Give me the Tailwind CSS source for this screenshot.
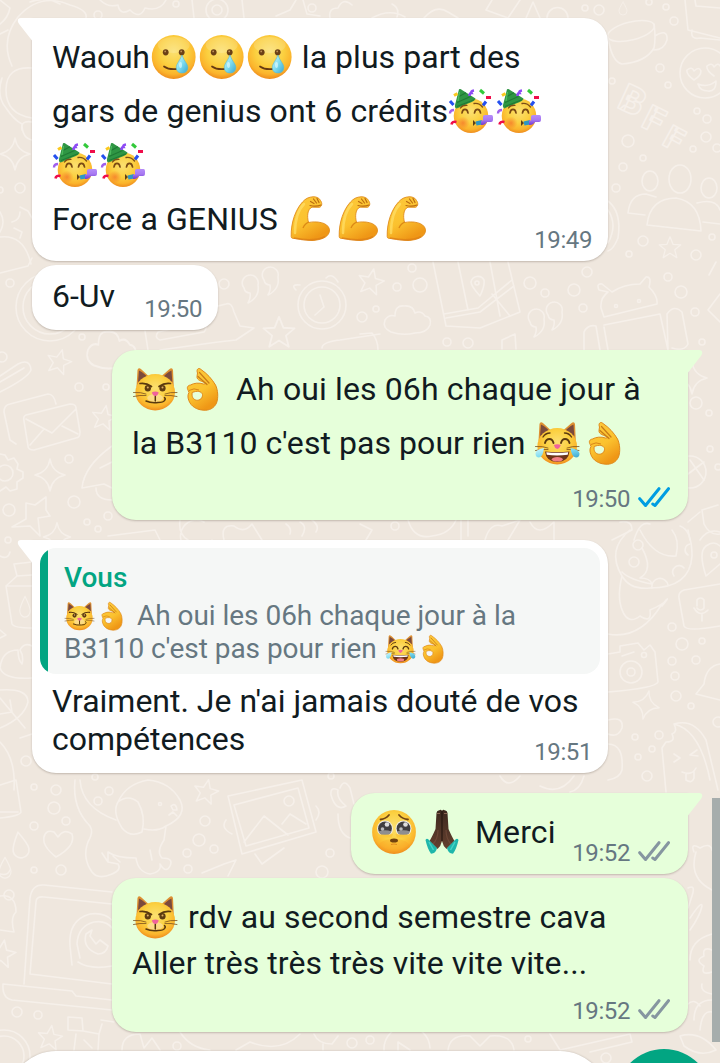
<!DOCTYPE html>
<html lang="fr">
<head>
<meta charset="utf-8">
<title>Discussion</title>
<script src="https://cdn.jsdelivr.net/npm/@tailwindcss/browser@4"></script>
</head>
<body class="h-[1063px] overflow-hidden bg-[#efe7de] font-['Roboto',sans-serif] text-[#111b21]">
<div class="relative h-[1063px] w-[720px] overflow-hidden">

<!-- Shared emoji and icon artwork -->
<svg class="absolute size-0" aria-hidden="true">
  <defs>
    <radialGradient id="face" cx=".5" cy=".38" r=".64"><stop offset="0" stop-color="#fbe071"/><stop offset=".5" stop-color="#fbd040"/><stop offset=".8" stop-color="#fbb42c"/><stop offset="1" stop-color="#ec861c"/></radialGradient>
    <linearGradient id="skin" x1="0" y1="0" x2=".5" y2="1"><stop offset="0" stop-color="#fdc93c"/><stop offset=".6" stop-color="#fbc22f"/><stop offset="1" stop-color="#ef9716"/></linearGradient>
    <linearGradient id="tear" x1="0" y1="0" x2="1" y2="1"><stop offset="0" stop-color="#d5f7fc"/><stop offset=".5" stop-color="#7fdcf0"/><stop offset="1" stop-color="#3ba7cf"/></linearGradient>
    <linearGradient id="dark" x1="0" y1="0" x2="0" y2="1"><stop offset="0" stop-color="#3d281f"/><stop offset="1" stop-color="#64402f"/></linearGradient>
    <linearGradient id="horn" x1="0" y1="0" x2="0" y2="1"><stop offset="0" stop-color="#b68cf8"/><stop offset=".5" stop-color="#a779f2"/><stop offset="1" stop-color="#7137cf"/></linearGradient>
    <radialGradient id="blush"><stop offset="0" stop-color="#f5762a" stop-opacity=".75"/><stop offset="1" stop-color="#f5762a" stop-opacity="0"/></radialGradient>

    <symbol id="e-tear" viewBox="0 0 48 48">
      <circle cx="23.7" cy="24" r="21.9" fill="url(#face)"/>
      <ellipse cx="23.7" cy="12" rx="16" ry="8" fill="#fff" opacity=".16"/>
      <ellipse cx="15.7" cy="19.3" rx="2.9" ry="3.1" fill="#6b4016"/><ellipse cx="31.7" cy="19.3" rx="2.9" ry="3.1" fill="#6b4016"/>
      <circle cx="15.2" cy="18.4" r=".9" fill="#c09158"/><circle cx="31.2" cy="18.4" r=".9" fill="#c09158"/>
      <path d="M14 33.5Q19 37 27 36" fill="none" stroke="#643a12" stroke-width="1.7" stroke-linecap="round"/>
      <path d="M32 22C29 29 26.300 31 26.300 34.500C26.300 38 28.500 40 32 40C35.500 40 37.800 38 37.800 34.500C37.800 31 34.500 29 32 22Z" fill="url(#tear)" stroke="#56b9d3" stroke-width=".6"/>
      <ellipse cx="30.500" cy="32" rx="1.500" ry="3" fill="#e9fdff" opacity=".6"/>
    </symbol>

    <symbol id="e-party" viewBox="0 0 48 48">
      <circle cx="23" cy="28.800" r="17.300" fill="url(#face)"/>
      <circle cx="15" cy="36" r="6.500" fill="url(#blush)"/>
      <path d="M11 2.300Q12.500 1.500 14 3L27.500 11.500Q27.500 14 20 16.500Q12 20 8.500 21.500Q6.500 21 7 18Z" fill="#2f9644"/>
      <path d="M10 10L18 5.800M9 15.500L22.500 9.500M9 19.500L26 12.800" stroke="#1f7a35" stroke-width="1.100"/>
      <path d="M11.500 5L10 14" stroke="#4cb95e" stroke-width="1.300"/>
      <path d="M14 26Q14.500 22.300 17 22.300Q19.500 22.300 20 26M26.500 26Q27 22.300 29.500 22.300Q32 22.300 32.500 26" fill="none" stroke="#7a4a14" stroke-width="1.700" stroke-linecap="round"/>
      <path d="M12.500 21Q14.500 18 19 18.300M26 16.500Q31 15.500 34.500 20" fill="none" stroke="#7d4e17" stroke-width="1.300" stroke-linecap="round"/>
      <path d="M25 33L28 36L25 39Z" fill="#604017"/>
      <path d="M27.500 34.500L34 33V37.500L28.500 38.500Z" fill="#2f96c5"/>
      <path d="M33 33.500H35V29.500Q35 28 37 28H43.500Q45 28 45 30V33Q45 35 43 35H39Q37 38.500 33 38Z" fill="url(#horn)"/>
      <path d="M21.500 9Q21.500 6 23.500 6Q22.500 4 26 3.500" fill="none" stroke="#8d4af5" stroke-width="2.600"/>
      <path d="M32 3L36 6.500" stroke="#32c93b" stroke-width="3"/>
      <path d="M38 10.500H43" stroke="#ef0d4a" stroke-width="3"/><path d="M35 18.500L38 14.500M2 14L5.500 18" stroke="#2450ef" stroke-width="3"/>
      <path d="M6 8.500L9.500 6.500" stroke="#fbc91f" stroke-width="3"/><path d="M2 26.500Q2 23 6 23" fill="none" stroke="#a060ec" stroke-width="2.400"/>
      <path d="M3.500 37.500Q4 34 8.500 35" fill="none" stroke="#ef0d4a" stroke-width="2.600"/>
    </symbol>

    <symbol id="e-arm" viewBox="0 0 48 48">
      <path d="M5.200 41.500C4.800 27 10 14 16.500 7C19.500 3.500 23 2 27 1.800C30 1.500 33.500 3 34.500 5.500C36.500 8 36 11.500 33.500 12.300L26 12.200C21.500 14 20.800 21 22.500 27.500C30 26 42 27 43.500 34.500C44 41.500 36 45 26 45.500C18 45 10 43.500 6.500 43.300Q5.200 43 5.200 41.500Z" fill="url(#skin)" stroke="#e08b1a" stroke-width=".9"/>
      <path d="M9 38C9 26 12 15 18 9" fill="none" stroke="#ffe06a" stroke-width="2.500" opacity=".7" stroke-linecap="round"/>
      <path d="M24.500 6.500L28 8.500M27.500 4L30.500 8M31 3.500L33 7.500M24 10.500Q30 12 35 10" fill="none" stroke="#bb6c12" stroke-width="1.200" stroke-linecap="round"/>
      <path d="M17 33Q19 28.500 22.800 27.200" fill="none" stroke="#dc8915" stroke-width="1.300"/>
      <path d="M8 43C17 45 30 46 39 41.500" fill="none" stroke="#dd7e16" stroke-width="1.600" opacity=".7"/>
    </symbol>

    <symbol id="e-ok" viewBox="0 0 48 48">
      <path fill-rule="evenodd" d="M17.500 8C16 4.500 18.500 2 21 4.500C27 8.500 32 14 35.500 20C38 25 38.500 33 36.500 38C34 43.500 29 45.500 24 45.200C17 45 11 41.500 8.800 35.500C7.500 32 7.800 29.500 9 27.500L8.200 25.500C6.500 22.500 7.500 20.500 10.500 20C14 18 19 17.500 23.500 19L26.500 18.500C22 16 16.500 15.500 17 11.500ZM12.200 27.500C11.500 31.500 13 34.500 16.500 35.200C20 35.700 22.800 33 22.500 29.500C21.500 26 17 25.500 12.200 27.500Z" fill="url(#skin)" stroke="#df891b" stroke-width="1"/>
      <path d="M19.500 7.500L29 18M18 11.500L27 19.500" fill="none" stroke="#c77b18" stroke-width="1.200" stroke-linecap="round"/>
      <path d="M9 25.500Q14 22.500 19 25" fill="none" stroke="#d98619" stroke-width="1"/>
    </symbol>

    <g id="cathead">
      <path d="M4.500 22L5.500 5Q6.300 1.800 9.500 4.500L17 11.500ZM41.800 22L41 5Q40.200 1.800 37 4.500L29 11.500Z" fill="#dd9033"/>
      <path d="M6 17L7 5.500Q13 8.500 15 12ZM40.300 17L39.500 5.500Q33.500 8.500 31.500 12Z" fill="#7b4a3c"/>
      <ellipse cx="23.200" cy="27.200" rx="19.800" ry="18.200" fill="url(#face)"/>
    </g>
    <g id="whisk" fill="none" stroke="#7a4f1d" stroke-width=".8" stroke-linecap="round"><path d="M1.500 27.500Q9 27 14 29M1.500 31.500Q8 30 14 30.500M45 27.500Q38 27 33 29M45 31.500Q39 30 33 30.500"/></g>
    <symbol id="e-cat" viewBox="0 0 48 48">
      <use href="#cathead"/><ellipse cx="23.200" cy="33" rx="8" ry="4" fill="#fde4b0" opacity=".6"/><use href="#whisk"/>
      <ellipse cx="15.800" cy="23.300" rx="3.100" ry="3.200" fill="#5f3d12"/><ellipse cx="30.500" cy="23.300" rx="3.100" ry="3.200" fill="#5f3d12"/>
      <circle cx="15.800" cy="22.500" r="1" fill="#e0b060"/><circle cx="30.500" cy="22.500" r="1" fill="#e0b060"/>
      <path d="M8 18.500Q14 17.500 19.500 21.500M38.500 18.500Q32.500 17.500 27 21.500" fill="none" stroke="#5a390f" stroke-width="1.700" stroke-linecap="round"/>
      <path d="M19.800 27.500Q23.300 25.500 26.800 27.500Q26 30.500 23.300 31.500Q20.500 30.500 19.800 27.500Z" fill="#f0629c"/>
      <path d="M23.300 31.500V36M14 36Q19 38.300 26 37.500Q31.500 37.500 32.500 35.500Q34 34 32.500 32.500" fill="none" stroke="#5a390f" stroke-width="1.500" stroke-linecap="round"/>
    </symbol>
    <symbol id="e-joycat" viewBox="0 0 48 48">
      <use href="#cathead"/><use href="#whisk"/>
      <path d="M11 24Q12 20 15.500 20Q18.500 20 19.500 24M27 24Q28 20 31 20Q34.500 20 35.500 24" fill="none" stroke="#5a390f" stroke-width="1.900" stroke-linecap="round"/>
      <path d="M9 18Q11.500 14 16 14M37.500 18Q35 14 30.500 14" fill="none" stroke="#5a390f" stroke-width="1.400" stroke-linecap="round"/>
      <path d="M11 32.500Q23 33.500 35.500 32.500Q34.500 43 23.300 43Q12 43 11 32.500Z" fill="#6d3519"/>
      <path d="M12.300 33.300Q23 34.300 34.200 33.300L33.700 35.800Q23 37 12.800 35.800Z" fill="#fff"/><ellipse cx="23.300" cy="40.300" rx="5.500" ry="2.300" fill="#f17f86"/>
      <path d="M19.800 26Q23.300 24.300 26.800 26Q26 29 23.300 30Q20.500 29 19.800 26Z" fill="#f0629c"/>
      <path d="M10 29Q2 30 1.500 34.500Q1.500 38.500 5 38.500Q9 38 10 29ZM36.500 29Q44.500 30 45.500 34.500Q45.500 38.500 42 38.500Q37.500 38 36.500 29Z" fill="url(#tear)"/>
    </symbol>

    <symbol id="e-plead" viewBox="0 0 48 48">
      <circle cx="23" cy="24" r="21.900" fill="url(#face)"/><ellipse cx="23" cy="38" rx="15" ry="7" fill="#f79a22" opacity=".25"/>
      <circle cx="14" cy="20.500" r="8" fill="#f2eee5"/><circle cx="32.500" cy="20.500" r="8" fill="#f2eee5"/>
      <circle cx="14" cy="20.500" r="6.900" fill="#403e40"/><circle cx="32.500" cy="20.500" r="6.900" fill="#403e40"/>
      <path d="M7.500 23.500Q14 21 20.500 23.500Q19 27.500 14 27.500Q9 27.500 7.500 23.500ZM26 23.500Q32.500 21 39 23.500Q37.500 27.500 32.500 27.500Q27.500 27.500 26 23.500Z" fill="#8f8e8f"/>
      <path d="M6 26Q14 27.500 22 26L20.500 29.500H7.500ZM24.500 26Q32.500 27.500 40.500 26L39 29.500H26Z" fill="#fbc83a"/>
      <circle cx="16" cy="16.500" r="2.300" fill="#ddd"/><circle cx="34.500" cy="16.500" r="2.300" fill="#ddd"/><circle cx="11.500" cy="21" r="1.800" fill="#bbb"/><circle cx="30" cy="21" r="1.800" fill="#bbb"/>
      <path d="M9.500 11.500Q14.500 11 18 7M28 7Q31.500 11 37 11.500" fill="none" stroke="#724414" stroke-width="1.800" stroke-linecap="round"/>
      <ellipse cx="23" cy="32.500" rx="4" ry="2" fill="#70420e"/><path d="M20 36.500Q23 35.500 26 36.500" fill="none" stroke="#df8b20" stroke-width="1"/>
    </symbol>
    <symbol id="e-pray" viewBox="0 0 48 48">
      <path d="M17.500 5Q18 2 20 2.500Q22 1 23 3Q24 1 26 2.500Q28 2 28.500 5L29.500 21Q33 29 35.500 33L27.500 41Q24 38 23 33Q22 38 18.500 41L10.500 33Q13 29 16.500 21Z" fill="url(#dark)"/>
      <path d="M23 3V33" stroke="#23150f" stroke-width="1.100"/><path d="M18 5.500H21M25 5.500H28" stroke="#8d6653" stroke-width="1.200"/>
      <path d="M19 22Q19 31 14 36M27 22Q27 31 32 36" fill="none" stroke="#7c5240" stroke-width="1.200" opacity=".6"/>
      <path d="M6.500 32Q8 29.500 10.500 32.500L18 40Q17 45.500 12 45.700Q8.500 41 6.500 32ZM39.500 32Q38 29.500 35.500 32.500L28 40Q29 45.500 34 45.700Q37.500 41 39.500 32Z" fill="#1fb6ab"/>
      <path d="M10 34L14.500 42M36 34L31.500 42" stroke="#45d3c6" stroke-width="1.500"/>
    </symbol>

    <symbol id="ticks" viewBox="0 0 32 20"><path d="M1.700 11.700L7.500 18.500L21 1.700M14.700 17L17 18.500L30.500 1.700" fill="none" stroke="currentColor" stroke-width="3" stroke-linecap="round" stroke-linejoin="round"/></symbol>
    <symbol id="tail" viewBox="0 0 16 24"><path d="M16 0H5Q1.600 0 1.800 3.300Q2 4.800 3.500 6.500L16 22.500Z" fill="currentColor"/></symbol>
    <path id="star" d="M0-14L3.800-4.600L13.500-4L6 2.300L8.500 12L0 6.600L-8.500 12L-6 2.300L-13.500-4L-3.800-4.600Z"/>
    <path id="spark" d="M0-16Q2-3 15 0Q2 3 0 16Q-2 3-15 0Q-2-3 0-16Z"/>
    <path id="cloud" d="M-16 12Q-25 8-22 0Q-18-6-12-4Q-12-15-3-14Q6-15 8-7Q14-10 18-4Q25-3 23 5Q20 13 8 13Q-4 16-16 12Z"/>
    <path id="drop" d="M0-12Q8 1 8 6A8 8 0 0 1-8 6Q-8 1 0-12Z"/>
    <path id="quote" d="M-7 0A8 8 0 1 1 7-3Q9 9-3 15Q0 10-1 5Q-6 5-7 0Z"/>
  </defs>
</svg>

<!-- Wallpaper doodles -->
<svg class="absolute inset-0 h-[1063px] w-[720px]" viewBox="0 0 720 1063" fill="none" stroke="#f6f0ea" stroke-width="1.600" stroke-linecap="round" stroke-linejoin="round" aria-hidden="true">
  <g>
    <path d="M12 66Q0 40 18 17Q40-8 70 5Q88 10 86 18M30 2Q45-4 60 4M0 24Q8 18 10 8L0 0M0 34L8 30M100 0Q108 8 118 5Q120 16 130 10Q140 20 145 8Q160 12 166 0M192 0L194 18M242 0L244 18M276 16L290 10L296 0M303 0L307 14L320 16"/>
    <circle cx="217" cy="10" r="11"/><circle cx="217" cy="10" r="5"/><circle cx="176" cy="4" r="3"/><circle cx="98" cy="15" r="4"/><circle cx="312" cy="8" r="4"/>
    <path d="M330 18Q328 8 338 8Q343-3 352 5M372 18Q390 8 405 17M392 4Q400 8 397 17M492 0L486 10L508 18L520 0M526 18L533 2L540 18M547 18A10 10 0 1 1 568 18M424 18Q436 4 448 12L458 18"/>
    <path d="M32 68Q6 66 6 90Q6 114 32 118M2 78Q-4 96 6 108Q14 120 22 124Q22 138 32 140M32 122Q20 120 22 130"/>
    <use href="#spark" transform="translate(15 154)"/><circle cx="20" cy="188" r="5"/><circle cx="0" cy="190" r="3"/>
    <path d="M20 207L28 211L32 218M12 222Q20 220 20 212M14 228L22 232L20 238M0 237Q24 234 31 264M0 212Q6 222 0 232"/>
  </g>
  <g>
    <ellipse cx="631" cy="31" rx="24" ry="9" transform="rotate(-14 631 31)"/><path d="M608 38Q612 62 622 64Q646 62 654 48Q656 38 654 24M655 36Q668 28 667 40Q664 50 654 50"/>
    <path d="M685 0L688 30L720 38M692 30Q690 40 700 38L720 40M695 0L696 6L720 8"/>
    <circle cx="705" cy="73" r="25"/><path d="M694 80Q686 74 687 70Q692 66 694 71Q699 66 701 71Q701 76 694 80ZM714 76Q706 70 707 66Q712 62 714 67Q718 62 720 66M698 84Q708 88 716 81Q716 92 708 91Q700 91 698 84Z"/>
    <g font-family="Roboto" font-weight="900" font-size="38"><text transform="translate(616 107) rotate(25)">B</text><text transform="translate(640 126) rotate(27)" font-size="35">F</text><text transform="translate(661 144) rotate(29)" font-size="32">F</text></g>
    <ellipse cx="650" cy="181" rx="8" ry="10"/><ellipse cx="680" cy="179" rx="11" ry="14"/><ellipse cx="709" cy="188" rx="8" ry="10"/>
    <path d="M647 225Q650 198 676 198Q700 202 701 231ZM645 215L628 213Q630 194 646 194L656 197M697 203Q716 198 720 210M703 222L720 224"/>
    <use href="#star" transform="translate(670 248) scale(.8)"/><path d="M608 201Q622 212 618 238Q613 250 608 251M608 210Q618 225 608 243"/>
    <use href="#drop" transform="translate(623 8) scale(.5)"/>
    <circle cx="585" cy="8" r="3"/><circle cx="599" cy="10" r="5"/><circle cx="649" cy="2" r="3"/><circle cx="666" cy="7" r="3"/><circle cx="674" cy="21" r="4"/><circle cx="660" cy="68" r="4"/><circle cx="612" cy="81" r="3"/><circle cx="668" cy="85" r="3"/><circle cx="697" cy="111" r="3"/><circle cx="707" cy="119" r="4"/><circle cx="628" cy="141" r="6"/><circle cx="706" cy="137" r="5"/><circle cx="693" cy="149" r="3"/><circle cx="717" cy="148" r="4"/><circle cx="643" cy="158" r="3"/><circle cx="623" cy="167" r="4"/><circle cx="616" cy="188" r="4"/><circle cx="643" cy="241" r="5"/><circle cx="629" cy="254" r="3"/><circle cx="696" cy="255" r="5"/><circle cx="712" cy="237" r="3"/>
  </g>
  <g>
    <circle cx="50" cy="307" r="34"/><circle cx="50" cy="307" r="27"/><path d="M0 273L28 266L32 258"/>
    <circle cx="10" cy="283" r="4"/><circle cx="2" cy="357" r="5"/><circle cx="82" cy="337" r="3"/><circle cx="79" cy="387" r="4"/><circle cx="106" cy="387" r="3"/><circle cx="69" cy="459" r="4"/><circle cx="74" cy="502" r="6"/><circle cx="9" cy="510" r="6"/><circle cx="108" cy="516" r="4"/><circle cx="87" cy="522" r="3"/><circle cx="98" cy="529" r="3"/><circle cx="224" cy="284" r="5"/>
    <use href="#star" transform="translate(59 362) rotate(15) scale(.9)"/><use href="#cloud" transform="translate(111 350) scale(1.050 1.300)"/>
    <path d="M0 376L18 364Q30 358 31 370Q28 378 0 392M0 382L24 368"/>
    <path d="M16 444L10 440L4 412Q4 405 10 404L48 394Q54 394 56 404M26 415L70 404Q76 404 76 408L80 432Q80 438 76 438L34 450Q28 450 28 446L24 421Q23 416 26 415ZM26 419L52 433L76 409M30 445L44 429M78 434L62 426"/>
    <use href="#star" transform="translate(104 418) rotate(10) scale(.9)"/>
    <circle cx="5" cy="473" r="8"/><path d="M0 454L5 455L8 460L14 458L18 464L17 469L23 472L23 478L17 482L17 489L10 491L6 487L0 491"/>
    <use href="#spark" transform="translate(50 475)"/><path d="M112 446Q84 466 82 488L104 484L112 488M96 488Q96 500 112 500M100 468L112 462"/>
    <path d="M26 503L35 505L46 497L46 510L50 516L38 518L40 536L30 526L12 527L26 519Z"/><use href="#spark" transform="translate(57 537) scale(.9)"/>
    <use href="#quote" transform="translate(251 288)"/><use href="#quote" transform="translate(271 280)"/>
    <circle cx="322" cy="305" r="24"/><circle cx="322" cy="305" r="18"/><path d="M320 295L324 307L315 315M296 290Q290 284 300 285M326 278Q332 272 338 282"/>
    <use href="#star" transform="translate(279 333) scale(1.150)"/>
    <path d="M158 332L204 322Q208 328 204 332L160 340Q154 338 158 332ZM218 306L226 304Q232 302 234 312L240 326L254 328L236 340L218 342L160 350M145 331L148 350M322 348Q322 342 340 340L380 334M108 536L155 530L160 540M180 520Q178 534 188 540M212 540A16 16 0 1 1 204 522M224 540Q220 524 234 526Q244 534 252 524L262 540M286 524Q292 528 290 534M300 522Q308 526 302 536M312 520Q320 526 316 532"/>
  </g>
  <g>
    <use href="#star" transform="translate(371 282) rotate(12) scale(.95)"/><use href="#cloud" transform="translate(407 320)"/>
    <path d="M433 262L446 326L480 328L520 312L508 262M444 314L478 308L512 280M446 318L480 312L514 286M458 262L468 310M490 262L500 316M492 294L510 316M480 296Q471 286 471 282A7 7 0 0 1 484 280Q485 286 480 296Z"/><circle cx="477" cy="283" r="2"/>
    <use href="#quote" transform="translate(537 322)"/><use href="#quote" transform="translate(555 315)"/>
    <path d="M604 317L601 308Q600 298 608 292L599 290Q596 283 602 284L612 292Q624 284 640 284L646 277Q652 276 649 287Q658 296 657 304ZM604 325L660 314L668 350M608 350L604 327M584 350L584 332Q588 324 596 326L600 350M668 350L667 314Q674 304 682 312L688 344Q684 352 672 348M720 294L708 310L720 322M709 275L716 262"/>
    <circle cx="616" cy="306" r="1.500"/><circle cx="639" cy="301" r="1.500"/>
    <path d="M502 349L502 340L515 334L516 349M360 334L372 333Q378 340 378 350"/>
    <circle cx="397" cy="287" r="4"/><circle cx="420" cy="285" r="7"/><circle cx="412" cy="268" r="4"/><circle cx="362" cy="317" r="5"/><circle cx="376" cy="309" r="3"/><circle cx="530" cy="283" r="6"/><circle cx="545" cy="293" r="4"/><circle cx="587" cy="272" r="5"/><circle cx="574" cy="290" r="6"/><circle cx="583" cy="308" r="4"/><circle cx="668" cy="277" r="4"/><circle cx="681" cy="292" r="6"/><circle cx="695" cy="312" r="4"/><circle cx="447" cy="342" r="4"/><circle cx="468" cy="343" r="5"/><circle cx="702" cy="342" r="3"/><circle cx="696" cy="403" r="6"/><circle cx="709" cy="413" r="3"/><circle cx="710" cy="449" r="3"/><circle cx="718" cy="467" r="3"/>
    <use href="#spark" transform="translate(692 378)"/><circle cx="690" cy="472" r="16"/><path d="M688 474L704 462M690 460L704 480M718 505L702 510L704 524Q710 536 720 534M688 522L700 512M700 540Q708 528 720 532M690 540L688 530"/>
    <circle cx="395" cy="526" r="4"/><path d="M360 524L372 530L366 540M408 520Q414 540 432 536Q450 534 456 520M461 520L461 540M468 520L468 536M485 540Q490 522 502 526L520 520L508 540M530 522Q538 538 554 522L554 540M620 522Q632 520 632 530L612 540M634 540Q640 520 650 524"/>
  </g>
  <g>
    <circle cx="8" cy="540" r="3"/><path d="M0 556Q8 560 10 552M14 564L32 562M14 564L17 576L6 586L12 624Q14 628 32 628M6 586L32 586M17 576L32 575"/><use href="#drop" transform="translate(25 606) scale(.65 .8)"/>
    <path d="M0 630L6 635L0 638M32 646Q24 642 20 650Q24 656 22 664Q18 660 18 650Q2 650 0 668Q4 680 32 678M0 690Q28 688 28 702Q24 718 0 728M0 698L25 728M10 700L12 712L0 714M0 742Q16 758 14 790M20 738L32 734"/>
    <circle cx="26" cy="761" r="5"/><circle cx="34" cy="787" r="3"/><circle cx="95" cy="777" r="3"/><circle cx="331" cy="776" r="3"/><circle cx="56" cy="790" r="5"/><circle cx="109" cy="791" r="4"/><circle cx="98" cy="801" r="4"/><circle cx="54" cy="808" r="6"/><circle cx="66" cy="821" r="4"/><circle cx="34" cy="826" r="4"/><circle cx="205" cy="821" r="5"/><circle cx="199" cy="840" r="6"/><circle cx="214" cy="849" r="4"/><circle cx="187" cy="853" r="4"/><circle cx="188" cy="869" r="4"/><circle cx="61" cy="870" r="5"/><circle cx="34" cy="870" r="3"/><circle cx="330" cy="853" r="4"/><circle cx="322" cy="872" r="6"/>
    <path d="M0 785L16 780L21 812Q20 816 0 818M0 812L18 812"/><use href="#drop" transform="translate(20 844) rotate(-10)"/><use href="#drop" transform="translate(5 867) scale(.75 .8)"/>
    <path d="M56 857Q42 846 44 837Q46 829 54 832L58 837Q64 828 72 834Q76 846 56 857Z"/>
    <path d="M75 780Q72 808 90 826Q94 832 88 842Q82 858 92 872Q98 880 112 874Q122 870 118 864L108 862L108 852Q116 858 136 858Q138 872 150 874Q162 872 160 864Q166 874 170 866Q174 858 162 858Q156 852 164 840L166 826M80 780Q82 808 116 820M118 802Q126 784 148 780Q170 782 180 800Q188 816 166 826Q158 832 144 829M118 802Q128 794 138 802Q146 816 142 832Q130 838 122 828Q112 812 118 802ZM113 856L120 862M150 850L152 860M102 853L108 862"/>
    <circle cx="160" cy="804" r="1.500"/><path d="M171 806Q176 802 177 810L173 810ZM169 815L173 812L177 816"/>
    <use href="#star" transform="translate(206 792) rotate(12) scale(.9)"/>
    <path d="M228 796L302 780L316 832L242 854ZM234 805L298 788L309 828L246 846ZM244 842L264 816L288 835M282 824L290 814L306 824M255 854L262 864L284 848M226 820Q220 828 232 834M316 806Q322 812 316 820M202 873L224 864L236 860L228 876M331 795Q330 786 338 790Q336 798 346 806Q336 812 331 795ZM340 788Q344 778 350 788L354 804M338 814Q338 834 350 838"/><circle cx="289" cy="801" r="5"/>
    <path d="M0 874Q8 876 10 870M0 896Q16 894 16 912Q10 918 14 932L0 930"/><circle cx="9" cy="895" r="5"/>
    <path d="M24 984L30 898Q32 884 44 885L112 892M30 974L36 902Q36 896 44 897L112 904M30 974L112 984M3 984L72 991L76 996L112 1000M3 984Q2 998 12 1000L112 1010"/>
    <path d="M72 965L70 946Q68 920 90 914Q104 912 112 920M80 958L77 944Q78 926 94 922Q106 920 112 928M78 962Q90 970 112 966M86 934Q82 948 98 954Q106 954 108 946L100 940L96 944L90 936L92 930Z"/>
    <use href="#star" transform="translate(2 954) rotate(10)"/><use href="#star" transform="translate(50 1038) rotate(8) scale(.9)"/>
    <circle cx="17" cy="1012" r="5"/><circle cx="38" cy="1015" r="4"/><circle cx="4" cy="1056" r="26"/><circle cx="4" cy="1056" r="20"/>
    <path d="M68 1017L82 1018L83 1031L68 1030ZM101 1020L114 1022M83 1031L99 1034L102 1024M74 1050L76 1034M99 1034L98 1050M84 1040L92 1048M122 1050Q122 1034 140 1034L144 1048L152 1038L160 1050M180 1032Q190 1048 210 1050M236 1050L250 1042Q280 1054 300 1034M314 1034Q318 1044 332 1044L338 1036M323 1044V1050"/><circle cx="177" cy="1046" r="4"/><circle cx="352" cy="1043" r="5"/><circle cx="370" cy="1040" r="4"/>
    <path d="M384 1050A22 22 0 0 1 430 1048M398 1050L398 1042L410 1050M448 1050Q450 1034 470 1036L480 1046L490 1036Q512 1034 514 1050M550 1034L560 1050L630 1034L632 1042L590 1052M680 1036Q700 1030 716 1050Q700 1058 684 1046Z"/><circle cx="528" cy="1039" r="3"/><circle cx="606" cy="1058" r="5"/>
  </g>
  <g>
    <path d="M630 530Q606 550 622 576Q616 600 624 614Q630 624 640 616Q652 624 650 610Q664 604 666 600Q670 596 662 606M622 576Q630 590 650 588Q690 588 692 556Q692 530 680 526M640 530Q654 558 676 556Q680 540 672 530M642 548Q654 570 640 578Q650 578 652 584Q630 580 622 572M608 634Q640 640 662 604"/>
    <circle cx="638" cy="545" r="5"/><circle cx="634" cy="562" r="5"/><path d="M652 588A8 8 0 0 1 668 585M674 576A6 6 0 0 1 684 568M688 555A6 6 0 0 1 690 544M706 576Q698 552 706 546Q714 540 720 546M706 576L720 564"/><circle cx="714" cy="555" r="3"/>
    <path d="M720 584L684 590Q678 592 679 598L684 626Q686 632 720 626M697 606V600A4 4 0 0 1 704 600V608A4 4 0 0 1 697 608M694 608Q700 618 708 610M702 614V621"/>
    <path d="M608 654L620 652L620 646L638 643L644 650L650 645L655 652L658 682Q656 688 608 692M622 656L634 652"/><circle cx="631" cy="672" r="11"/><circle cx="631" cy="672" r="4"/><circle cx="644" cy="655" r="2.500"/>
    <path d="M720 664Q706 666 704 684L696 694L720 700"/>
    <use href="#spark" transform="translate(646 705) scale(.9) rotate(12)"/>
    <path d="M662 748L666 742Q676 742 672 734Q678 732 674 724Q694 718 706 740L718 790M662 748L666 792M674 724Q700 730 710 780M674 754L680 758L674 762M697 750L690 755L698 756M682 772Q692 776 696 768M686 774V780Q692 784 694 778V772M608 720Q624 716 622 728Q618 738 608 734M608 744Q624 744 622 770Q620 778 608 780M500 776Q508 790 520 776M540 786Q560 796 574 776M584 776Q580 790 570 792"/>
    <circle cx="672" cy="627" r="4"/><circle cx="682" cy="644" r="6"/><circle cx="702" cy="641" r="3"/><circle cx="696" cy="660" r="4"/><circle cx="672" cy="661" r="4"/><circle cx="675" cy="676" r="4"/><circle cx="676" cy="696" r="5"/><circle cx="691" cy="706" r="3"/><circle cx="635" cy="737" r="3"/><circle cx="659" cy="735" r="4"/><circle cx="652" cy="749" r="3"/><circle cx="638" cy="757" r="3"/><circle cx="647" cy="776" r="5"/><circle cx="718" cy="722" r="5"/>
    <path d="M694 852Q690 842 700 848Q710 842 712 850M696 852Q688 878 712 890M688 888Q696 884 692 896L688 908M690 918Q702 900 702 906Q700 916 690 930M712 934Q690 940 690 960M712 950Q702 946 704 956Q694 960 704 966Q700 976 712 972M694 1020Q694 1000 712 1000M700 1030Q702 1010 712 1012M702 984Q700 992 712 994M688 1004Q694 998 700 1006"/>
  </g>
</svg>

<!-- Scroll thumb -->
<div class="absolute top-[798px] right-0 h-[244px] w-2 bg-[#a6adac]"></div>

<main class="relative flex flex-col pt-[18px] pl-8 text-[32px] [&_span]:whitespace-pre">

  <article class="relative h-[243px] w-[576px] rounded-3xl rounded-tl-none bg-white pt-3 pr-4 pl-5 shadow-[0_1px_2px_rgba(60,45,30,0.25)]">
    <svg class="absolute top-0 -left-4 h-6 w-4 text-white"><use href="#tail"/></svg>
    <div class="flex h-[54px] items-center"><span class="tracking-[-0.2px]">Waouh</span><svg class="size-12"><use href="#e-tear"/></svg><svg class="size-12"><use href="#e-tear"/></svg><svg class="size-12"><use href="#e-tear"/></svg><span class="tracking-[0.05px]"> la plus part des</span></div>
    <div class="flex h-[54px] items-center"><span class="tracking-[0.1px]">gars de genius ont 6 crédits</span><svg class="size-12"><use href="#e-party"/></svg><svg class="size-12"><use href="#e-party"/></svg></div>
    <div class="flex h-[54px] items-center"><svg class="size-12"><use href="#e-party"/></svg><svg class="size-12"><use href="#e-party"/></svg></div>
    <div class="flex h-[54px] items-center"><span class="tracking-[0.1px]">Force a GENIUS </span><svg class="size-12"><use href="#e-arm"/></svg><svg class="size-12"><use href="#e-arm"/></svg><svg class="size-12"><use href="#e-arm"/></svg><time class="-mb-[6px] ml-auto self-end text-2xl/6 tracking-[-0.4px] text-[#667781]">19:49</time></div>
  </article>

  <article class="mt-1 flex h-[65px] w-[186px] items-start justify-between rounded-3xl bg-white pr-4 pl-5 shadow-[0_1px_2px_rgba(60,45,30,0.25)]">
    <span class="mt-3 leading-[38px]">6-Uv</span><time class="mt-8 text-2xl/6 tracking-[-0.4px] text-[#667781]">19:50</time>
  </article>

  <article class="relative mt-5 ml-20 h-[170px] w-[576px] rounded-3xl rounded-tr-none bg-[#e6ffda] pt-3 pr-[18px] pl-5 shadow-[0_1px_2px_rgba(60,45,30,0.25)]">
    <svg class="absolute top-0 -right-4 h-6 w-4 -scale-x-100 text-[#e6ffda]"><use href="#tail"/></svg>
    <div class="flex h-[54px] items-center"><svg class="size-12"><use href="#e-cat"/></svg><svg class="size-12"><use href="#e-ok"/></svg><span class="tracking-[0.13px]"> Ah oui les 06h chaque jour à</span></div>
    <div class="flex h-[54px] items-center"><span class="tracking-[0.06px]">la B3110 c'est pas pour rien </span><svg class="size-12"><use href="#e-joycat"/></svg><svg class="size-12"><use href="#e-ok"/></svg></div>
    <div class="mt-[17px] flex items-center justify-end gap-2"><time class="text-2xl/6 tracking-[-0.4px] text-[#667781]">19:50</time><svg class="-mt-1 h-5 w-8 text-[#009de2]"><use href="#ticks"/></svg></div>
  </article>

  <article class="relative mt-5 h-[233px] w-[576px] rounded-3xl rounded-tl-none bg-white p-2 shadow-[0_1px_2px_rgba(60,45,30,0.25)]">
    <svg class="absolute top-0 -left-4 h-6 w-4 text-white"><use href="#tail"/></svg>
    <blockquote class="flex h-[126px] overflow-hidden rounded-2xl bg-[#f5f7f6] text-[28px]/[33px] text-[#667781]">
      <div class="w-2 bg-[#02a582]"></div>
      <div class="pt-[13px] pl-4">
        <div class="font-medium text-[#02a582]">Vous</div>
        <div class="mt-[5px] flex h-[33px] items-center gap-px"><svg class="size-8"><use href="#e-cat"/></svg><svg class="size-8"><use href="#e-ok"/></svg><span class="tracking-[-0.03px]"> Ah oui les 06h chaque jour à la</span></div>
        <div class="flex h-[33px] items-center gap-px"><span class="tracking-[-0.05px]">B3110 c'est pas pour rien </span><svg class="size-8"><use href="#e-joycat"/></svg><svg class="size-8"><use href="#e-ok"/></svg></div>
      </div>
    </blockquote>
    <div class="mt-2 pr-2 pl-3 leading-[38px]">
      <div>Vraiment. Je n'ai jamais douté de vos</div>
      <div class="flex justify-between"><span>compétences</span><time class="mt-5 text-2xl/6 tracking-[-0.4px] text-[#667781]">19:51</time></div>
    </div>
  </article>

  <article class="relative mt-5 ml-[319px] flex h-[81px] w-[337px] rounded-3xl rounded-tr-none bg-[#e6ffda] pt-3 pr-[18px] pl-5 shadow-[0_1px_2px_rgba(60,45,30,0.25)]">
    <svg class="absolute top-0 -right-4 h-6 w-4 -scale-x-100 text-[#e6ffda]"><use href="#tail"/></svg>
    <div class="flex h-[54px] items-center"><svg class="size-12"><use href="#e-plead"/></svg><svg class="size-12"><use href="#e-pray"/></svg><span class="tracking-[0.1px]"> Merci</span></div>
    <div class="mt-9 ml-auto flex h-6 items-center gap-2"><time class="text-2xl/6 tracking-[-0.4px] text-[#667781]">19:52</time><svg class="-mt-1 h-5 w-8 text-[#8696a0]"><use href="#ticks"/></svg></div>
  </article>

  <article class="mt-1 ml-20 h-[154px] w-[576px] rounded-3xl bg-[#e6ffda] pt-3 pr-[18px] pl-5 shadow-[0_1px_2px_rgba(60,45,30,0.25)]">
    <div class="flex h-[54px] items-center"><svg class="size-12"><use href="#e-cat"/></svg><span class="tracking-[0.14px]"> rdv au second semestre cava</span></div>
    <div class="leading-[38px] tracking-[0.06px]">Aller très très très vite vite vite...</div>
    <div class="mt-[17px] flex items-center justify-end gap-2"><time class="text-2xl/6 tracking-[-0.4px] text-[#667781]">19:52</time><svg class="-mt-1 h-5 w-8 text-[#8696a0]"><use href="#ticks"/></svg></div>
  </article>
</main>

<!-- Composer -->
<footer class="relative mt-[17px] ml-2 flex h-[14px] items-start gap-2 overflow-hidden">
  <div class="mt-0.5 h-24 w-[600px] shrink-0 rounded-full bg-white shadow-[0_0_2px_rgba(60,45,30,0.25)]"></div>
  <div class="size-24 shrink-0 rounded-full bg-[#02a582]"></div>
</footer>
</div>
</body>
</html>
